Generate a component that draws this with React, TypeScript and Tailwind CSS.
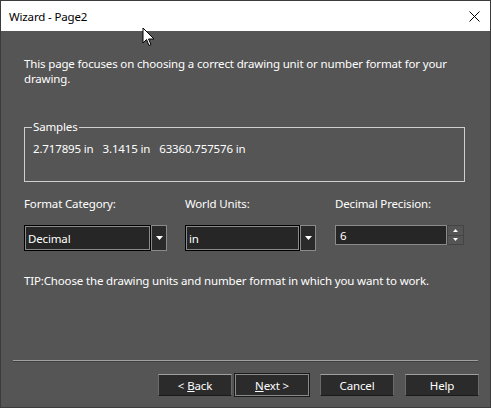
import { ReactNode } from "react";

function Combo({ value, width }: { value: string; width: string }) {
  return (
    <div className={`flex h-[26px] ${width}`}>
      <div className="flex-1 flex items-center border border-black bg-[#262626] shadow-[inset_0_0_0_1px_#8a8a8a] pl-[3px]">
        {value}
      </div>
      <div className="w-[16px] flex items-center justify-center border border-[#8a8a8a] bg-[#2a2a2a]">
        <svg width="7" height="4" viewBox="0 0 7 4">
          <path d="M0 0h7L3.5 4z" fill="#ffffff" />
        </svg>
      </div>
    </div>
  );
}

function Spin({ value }: { value: string }) {
  return (
    <div className="flex h-[20px] w-[129px]">
      <div className="flex-1 flex items-center border border-[#8a8a8a] bg-[#262626] pl-[4px]">{value}</div>
      <div className="w-[17px] flex flex-col">
        <div className="flex-1 flex items-center justify-center border border-[#444] bg-[#555]">
          <svg width="5" height="3" viewBox="0 0 5 3">
            <path d="M2.5 0L5 3H0z" fill="#ffffff" />
          </svg>
        </div>
        <div className="flex-1 flex items-center justify-center border border-t-0 border-[#444] bg-[#555]">
          <svg width="5" height="3" viewBox="0 0 5 3">
            <path d="M0 0h5L2.5 3z" fill="#ffffff" />
          </svg>
        </div>
      </div>
    </div>
  );
}

function Btn({ children, focused }: { children: ReactNode; focused?: boolean }) {
  return (
    <button
      className={
        "w-[74px] h-[22px] bg-[#2b2b2b] flex items-center justify-center text-white " +
        (focused
          ? "border border-[#8a8a8a] shadow-[0_0_0_1px_#1a1a1a]"
          : "border border-[#6a6a6a] border-t-[#a0a0a0] border-b-[#1a1a1a]")
      }
    >
      {children}
    </button>
  );
}

export default function App() {
  return (
    <div className="relative w-[491px] h-[408px] flex flex-col bg-[#555555] border border-[#3c3c3c] text-[11.5px] tracking-[-0.15px] leading-[15px] text-white font-['Segoe_UI','Noto_Sans',sans-serif]">
      <div className="h-[30px] shrink-0 bg-white text-black flex items-center justify-between pl-[8px] pr-[10px]">
        <span>Wizard - Page2</span>
        <svg width="11" height="11" viewBox="0 0 11 11">
          <path d="M0.5 0.5l10 10M10.5 0.5l-10 10" stroke="#000" strokeWidth="1" />
        </svg>
      </div>

      <div className="flex-1 flex flex-col px-[23px] pt-[25px]">
        <p className="w-[440px]">
          This page focuses on choosing a correct drawing unit or number format for your drawing.
        </p>

        <fieldset className="mt-[35px] h-[61px] w-[441px] border border-[#cfcfcf] px-[8px] pb-[0px]">
          <legend className="px-[1px] ml-[-1px] leading-[12px]">Samples</legend>
          <div className="mt-[8px] flex gap-[9px]">
            <span>2.717895 in</span>
            <span>3.1415 in</span>
            <span>63360.757576 in</span>
          </div>
        </fieldset>

        <div className="mt-[14px] flex">
          <div className="w-[161px] flex flex-col gap-[14px]">
            <span>Format Category:</span>
            <Combo value="Decimal" width="w-[143px]" />
          </div>
          <div className="w-[150px] flex flex-col gap-[14px]">
            <span>World Units:</span>
            <Combo value="in" width="w-[131px]" />
          </div>
          <div className="flex flex-col gap-[14px]">
            <span>Decimal Precision:</span>
            <Spin value="6" />
          </div>
        </div>

        <p className="mt-[22px]">TIP:Choose the drawing units and number format in which you want to work.</p>
      </div>

      <div className="mx-[12px] h-[2px] border-t border-[#a0a0a0] border-b border-b-[#404040]" />

      <div className="h-[45px] shrink-0 flex items-start justify-end pr-[11px] pt-[12px]">
        <div className="flex gap-[3px]">
          <Btn>
            &lt; <span className="underline ml-[3px]">B</span>ack
          </Btn>
          <Btn focused>
            <span className="underline">N</span>ext &gt;
          </Btn>
        </div>
        <div className="flex gap-[11px] ml-[11px]">
          <Btn>Cancel</Btn>
          <Btn>Help</Btn>
        </div>
      </div>

      <svg className="absolute left-[141px] top-[26px]" width="13" height="20" viewBox="0 0 13 20">
        <path d="M1 1v15l3.5-3.5 2.5 6 2-1-2.5-5.5H12z" fill="#fff" stroke="#000" strokeWidth="1" strokeLinejoin="round" />
      </svg>
    </div>
  );
}
